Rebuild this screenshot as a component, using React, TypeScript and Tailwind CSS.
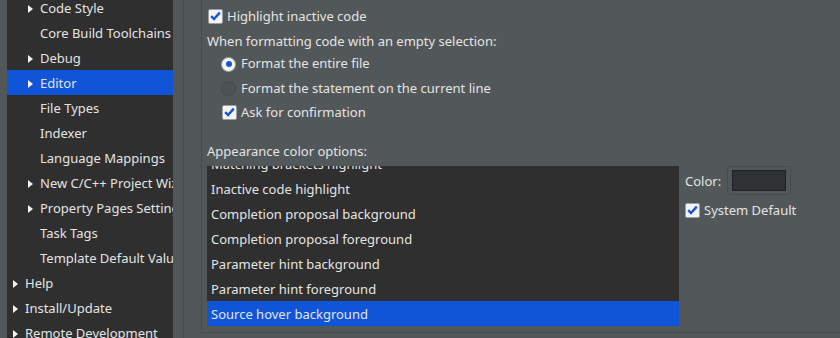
import React from "react";

const tree = [
  { label: "Code Style", level: 2, arrow: true },
  { label: "Core Build Toolchains", level: 2, arrow: false },
  { label: "Debug", level: 2, arrow: true },
  { label: "Editor", level: 2, arrow: true, selected: true },
  { label: "File Types", level: 2, arrow: false },
  { label: "Indexer", level: 2, arrow: false },
  { label: "Language Mappings", level: 2, arrow: false },
  { label: "New C/C++ Project Wizard", level: 2, arrow: true },
  { label: "Property Pages Settings", level: 2, arrow: true },
  { label: "Task Tags", level: 2, arrow: false },
  { label: "Template Default Values", level: 2, arrow: false },
  { label: "Help", level: 1, arrow: true },
  { label: "Install/Update", level: 1, arrow: true },
  { label: "Remote Development", level: 1, arrow: true },
];

const colorOptions = [
  "Matching brackets highlight",
  "Inactive code highlight",
  "Completion proposal background",
  "Completion proposal foreground",
  "Parameter hint background",
  "Parameter hint foreground",
  "Source hover background",
];

function Arrow() {
  return (
    <svg width="5" height="8" viewBox="0 0 5 8" className="shrink-0">
      <path d="M0 0 L5 4 L0 8 Z" fill="#f2f2f2" />
    </svg>
  );
}

function Checkbox() {
  return (
    <div className="w-[15px] h-[15px] shrink-0 rounded-[2px] border border-[#9a9ea1] bg-[#f4f4f4] flex items-center justify-center">
      <svg width="11" height="10" viewBox="0 0 11 10">
        <path d="M1.2 5.2 L4 8 L9.8 1.6" fill="none" stroke="#1655d6" strokeWidth="2.4" />
      </svg>
    </div>
  );
}

function Radio({ checked }: { checked: boolean }) {
  if (checked) {
    return (
      <div className="w-[15px] h-[15px] shrink-0 rounded-full border border-[#9a9ea1] bg-[#f4f4f4] flex items-center justify-center">
        <div className="w-[6px] h-[6px] rounded-full bg-[#1655d6]" />
      </div>
    );
  }
  return <div className="w-[15px] h-[15px] shrink-0 rounded-full border border-[#45494c] bg-[#4d5255]" />;
}

export default function App() {
  return (
    <div
      className="flex w-[840px] h-[338px] overflow-hidden bg-[#52575a] text-[13px] text-[#e4e4e4]"
      style={{ fontFamily: '"Noto Sans", "Open Sans", sans-serif' }}
    >
      <div className="w-[7px] shrink-0" />

      {/* tree */}
      <div className="w-[166px] shrink-0 bg-[#2f2f2f] overflow-hidden">
        <div className="mt-[-5px]">
          {tree.map((item) => (
            <div
              key={item.label}
              className={`h-[25px] flex items-center whitespace-nowrap pt-[2px] ${item.selected ? "bg-[#1055d7]" : ""} ${
                item.level === 2 ? "pl-[21px]" : "pl-[6px]"
              }`}
            >
              <div className="w-[5px] shrink-0 mr-[7px] flex items-center">{item.arrow && <Arrow />}</div>
              <span className="shrink-0">{item.label}</span>
            </div>
          ))}
        </div>
      </div>

      <div className="w-[10px] shrink-0" />
      <div className="w-px shrink-0 bg-[#474b4e]" />
      <div className="w-[17px] shrink-0" />

      {/* group box */}
      <div className="flex-1 h-[333px] border-l border-b border-[#474b4e] pl-[5px] pt-[4px] flex flex-col">
        <div className="h-[24px] flex items-center gap-[4px] pl-[1px]">
          <Checkbox />
          <span className="pt-[2px]">Highlight inactive code</span>
        </div>
        <div className="h-[24px] flex items-center pt-[3px]">When formatting code with an empty selection:</div>
        <div className="pl-[14px]">
          <div className="h-[24px] flex items-center gap-[5px]">
            <Radio checked />
            <span>Format the entire file</span>
          </div>
          <div className="h-[24px] flex items-center gap-[5px]">
            <Radio checked={false} />
            <span className="pt-[1px]">Format the statement on the current line</span>
          </div>
          <div className="h-[24px] flex items-center gap-[4px] pl-[1px]">
            <Checkbox />
            <span className="pt-[2px]">Ask for confirmation</span>
          </div>
        </div>

        <div className="mt-[15px] h-[24px] flex items-center pt-[2px]">Appearance color options:</div>

        <div className="mt-[3px] flex gap-[6px]">
          <div className="w-[472px] h-[160px] bg-[#2f2f2f] overflow-hidden">
            <div className="mt-[-15px]">
              {colorOptions.map((opt, i) => (
                <div
                  key={opt}
                  className={`h-[25px] flex items-center pl-[4px] pt-[2px] whitespace-nowrap ${
                    i === colorOptions.length - 1 ? "bg-[#1055d7]" : ""
                  }`}
                >
                  {opt}
                </div>
              ))}
            </div>
          </div>

          <div className="flex flex-col">
            <div className="h-[29px] flex items-center gap-[6px]">
              <span className="pt-[2px]">Color:</span>
              <div className="w-[64px] h-[29px] rounded-[3px] border border-[#484c4f] flex items-center justify-center">
                <div className="w-[54px] h-[21px] bg-[#2e3235] border border-[#1f2325]" />
              </div>
            </div>
            <div className="mt-[7px] h-[16px] flex items-center gap-[4px]">
              <Checkbox />
              <span className="pt-[2px]">System Default</span>
            </div>
          </div>
        </div>
      </div>
    </div>
  );
}
